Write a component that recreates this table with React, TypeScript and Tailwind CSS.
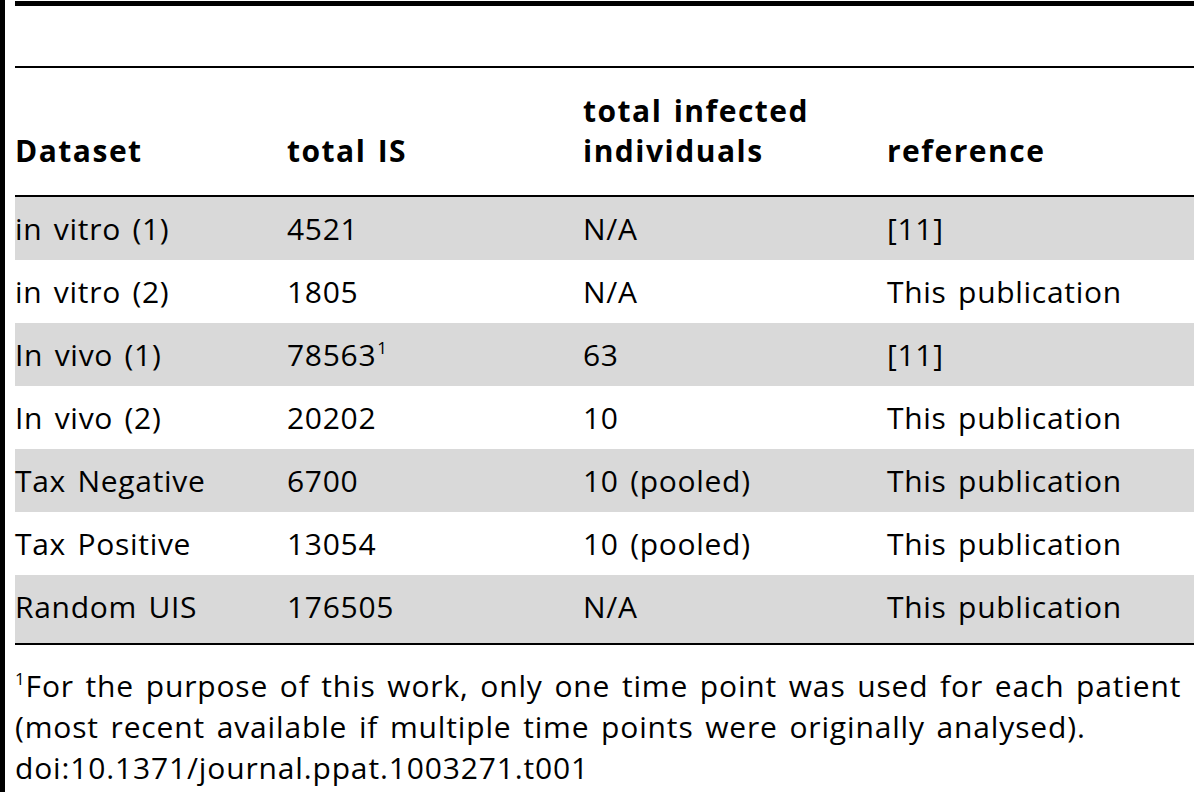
import React from "react";

const Sup = () => (
  <sup className="text-[17px] -top-[12px] ml-[1px]">1</sup>
);

const rows: { a: string; b: React.ReactNode; c: string; d: string }[] = [
  { a: "in vitro (1)", b: "4521", c: "N/A", d: "[11]" },
  { a: "in vitro (2)", b: "1805", c: "N/A", d: "This publication" },
  { a: "In vivo (1)", b: <>78563<Sup /></>, c: "63", d: "[11]" },
  { a: "In vivo (2)", b: "20202", c: "10", d: "This publication" },
  { a: "Tax Negative", b: "6700", c: "10 (pooled)", d: "This publication" },
  { a: "Tax Positive", b: "13054", c: "10 (pooled)", d: "This publication" },
  { a: "Random UIS", b: "176505", c: "N/A", d: "This publication" },
];

export default function App() {
  return (
    <div
      className="flex w-[1194px] bg-white text-black text-[30px] leading-[40px]"
      style={{ fontFamily: '"Open Sans", "Noto Sans", sans-serif' }}
    >
      <div className="w-[5px] bg-black shrink-0" />
      <div className="ml-[10px] flex-1 flex flex-col pb-[4px]">
        <div className="mt-[1px] h-[5px] bg-black" />
        <div className="h-[60px]" />
        <div className="h-[2px] bg-black" />
        <div className="grid grid-cols-[272px_296px_304px_1fr] items-end h-[127px] pb-[24px] font-bold tracking-[1.5px] [word-spacing:2px]">
          <div>Dataset</div>
          <div>total IS</div>
          <div>
            total infected
            <br />
            individuals
          </div>
          <div>reference</div>
        </div>
        <div className="h-[2px] bg-black" />
        {rows.map((r, i) => (
          <div
            key={i}
            className={`grid grid-cols-[272px_296px_304px_1fr] pt-[12px] tracking-[0.7px] [word-spacing:3px] ${
              i === rows.length - 1 ? "pb-[16px]" : "pb-[11px]"
            } ${i % 2 === 0 ? "bg-[#d9d9d9]" : "bg-white"}`}
          >
            <div>{r.a}</div>
            <div>{r.b}</div>
            <div>{r.c}</div>
            <div>{r.d}</div>
          </div>
        ))}
        <div className="h-[2px] bg-black" />
        <div className="mt-[20px] leading-[41px] whitespace-nowrap tracking-[0.85px] [word-spacing:3px]">
          <div>
            <sup className="text-[17px] -top-[12px]">1</sup>For the purpose of this work, only one time point was used for each patient
          </div>
          <div>(most recent available if multiple time points were originally analysed).</div>
          <div>doi:10.1371/journal.ppat.1003271.t001</div>
        </div>
      </div>
    </div>
  );
}
